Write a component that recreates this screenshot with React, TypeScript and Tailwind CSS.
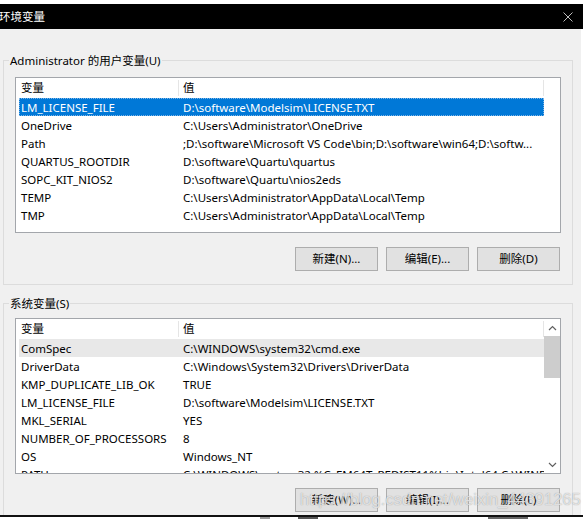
import React from "react";

const FONT = "font-['Noto_Sans','Noto_Sans_CJK_SC',sans-serif]";

type Row = { name: string; value: string; state?: "selected" | "hover" };

const userRows: Row[] = [
  { name: "LM_LICENSE_FILE", value: "D:\\software\\Modelsim\\LICENSE.TXT", state: "selected" },
  { name: "OneDrive", value: "C:\\Users\\Administrator\\OneDrive" },
  { name: "Path", value: ";D:\\software\\Microsoft VS Code\\bin;D:\\software\\win64;D:\\softw..." },
  { name: "QUARTUS_ROOTDIR", value: "D:\\software\\Quartu\\quartus" },
  { name: "SOPC_KIT_NIOS2", value: "D:\\software\\Quartu\\nios2eds" },
  { name: "TEMP", value: "C:\\Users\\Administrator\\AppData\\Local\\Temp" },
  { name: "TMP", value: "C:\\Users\\Administrator\\AppData\\Local\\Temp" },
];

const sysRows: Row[] = [
  { name: "ComSpec", value: "C:\\WINDOWS\\system32\\cmd.exe", state: "hover" },
  { name: "DriverData", value: "C:\\Windows\\System32\\Drivers\\DriverData" },
  { name: "KMP_DUPLICATE_LIB_OK", value: "TRUE" },
  { name: "LM_LICENSE_FILE", value: "D:\\software\\Modelsim\\LICENSE.TXT" },
  { name: "MKL_SERIAL", value: "YES" },
  { name: "NUMBER_OF_PROCESSORS", value: "8" },
  { name: "OS", value: "Windows_NT" },
  { name: "PATH", value: "C:\\WINDOWS\\system32;%C_EM64T_REDIST11%bin\\Intel64;C:\\WINDOWS;C:\\..." },
];

function Header() {
  return (
    <div className="flex h-[18px] shrink-0 pt-[2px] leading-[16px] text-[11.5px] text-black">
      <div className="w-[163px] pl-[5px] border-r border-[#e5e5e5]">变量</div>
      <div className="w-[365px] pl-[4px] border-r border-[#e5e5e5]">值</div>
    </div>
  );
}

function ListRow({ row }: { row: Row }) {
  const base =
    "ml-[3px] flex h-[18px] w-[525px] shrink-0 pt-[1px] leading-[17px] text-[11.5px] whitespace-nowrap";
  const cls =
    row.state === "selected"
      ? `${base} bg-[#0078d7] text-white outline outline-1 outline-dotted outline-[#7fb5e6] -outline-offset-1`
      : row.state === "hover"
      ? `${base} bg-[#e8e8e8] text-black`
      : `${base} text-black`;
  return (
    <div className={cls}>
      <div className="w-[159px] pl-[2px] overflow-hidden">{row.name}</div>
      <div className="w-[366px] pl-[5px] overflow-hidden">{row.value}</div>
    </div>
  );
}

function Chevron({ down }: { down?: boolean }) {
  return (
    <svg width="9" height="6" viewBox="0 0 9 6">
      <path
        d={down ? "M1 1 L4.5 4.5 L8 1" : "M1 5 L4.5 1.5 L8 5"}
        fill="none"
        stroke="#606060"
        strokeWidth="1.2"
      />
    </svg>
  );
}

function ListBox({ rows, scroll }: { rows: Row[]; scroll?: boolean }) {
  return (
    <div className="flex h-[156px] w-[546px] border border-[#a3a6ab] bg-white overflow-hidden">
      <div className="flex w-[528px] flex-col overflow-hidden">
        <Header />
        <div className="h-[2px] shrink-0" />
        {rows.map((r) => (
          <ListRow key={r.name} row={r} />
        ))}
      </div>
      {scroll ? (
        <div className="flex w-[16px] flex-col bg-white">
          <div className="flex h-[17px] items-center justify-center">
            <Chevron />
          </div>
          <div className="h-[42px] bg-[#cdcdcd]" />
          <div className="flex-1" />
          <div className="flex h-[17px] items-center justify-center">
            <Chevron down />
          </div>
        </div>
      ) : (
        <div className="w-[16px]" />
      )}
    </div>
  );
}

function Btn({ label }: { label: string }) {
  return (
    <div className="flex h-[24px] w-[83px] items-center justify-center border border-[#adadad] bg-[#e1e1e1] text-[11.5px] text-black">
      {label}
    </div>
  );
}

function Group({
  title,
  rows,
  scroll,
  buttons,
  className,
}: {
  title: string;
  rows: Row[];
  scroll?: boolean;
  buttons: string[];
  className: string;
}) {
  return (
    <div className={`relative ml-[3px] w-[570px] shrink-0 border border-[#dcdcdc] pl-[11px] pr-[11px] ${className}`}>
      <div className="absolute left-[5px] top-[-8px] bg-[#f0f0f0] px-[1px] text-[11.5px] leading-[16px] text-black">
        {title}
      </div>
      <ListBox rows={rows} scroll={scroll} />
      <div className="mt-[14px] flex justify-end gap-[8px] pr-[1px]">
        {buttons.map((b) => (
          <Btn key={b} label={b} />
        ))}
      </div>
    </div>
  );
}

export default function App() {
  return (
    <div className={`relative flex h-[519px] w-[583px] flex-col overflow-hidden bg-white ${FONT}`}>
      <div className="h-[4px] shrink-0 bg-white" />
      <div className="flex h-[25px] shrink-0 items-center justify-between bg-black pr-[10px]">
        <span className="-ml-[1px] text-[11.5px] leading-[16px] text-white">环境变量</span>
        <svg width="10" height="10" viewBox="0 0 10 10">
          <path d="M0.5 0.5 L9.5 9.5 M9.5 0.5 L0.5 9.5" stroke="#bdbdbd" strokeWidth="1" />
        </svg>
      </div>
      <div className="flex h-[486px] shrink-0">
        <div className="flex w-[581px] flex-col overflow-hidden bg-[#f0f0f0]">
          <Group
            title="Administrator 的用户变量(U)"
            rows={userRows}
            buttons={["新建(N)...", "编辑(E)...", "删除(D)"]}
            className="mt-[31px] pt-[16px] pb-[13px]"
          />
          <Group
            title="系统变量(S)"
            rows={sysRows}
            scroll
            buttons={["新建(W)...", "编辑(I)...", "删除(L)"]}
            className="mt-[18px] pt-[14px] pb-[13px]"
          />
        </div>
        <div className="w-[2px] bg-white" />
      </div>
      <div className="h-[2px] shrink-0 bg-[#111]" />
      <div className="relative flex h-[2px] shrink-0 bg-white">
        <div className="ml-[260px] h-[2px] w-[10px] bg-[#9a9a9a]" />
        <div className="ml-[28px] h-[2px] w-[20px] bg-[#555]" />
        <div className="ml-[170px] h-[2px] w-[40px] bg-[#666]" />
      </div>
      <div className="pointer-events-none absolute left-[300px] top-[487px] whitespace-nowrap font-['Liberation_Sans',sans-serif] text-[16.5px] leading-[24px] text-white/70 [text-shadow:0_0_1px_rgba(120,120,120,0.8)]">
        https://blog.csdn.net/weixin_44391265
      </div>
    </div>
  );
}
